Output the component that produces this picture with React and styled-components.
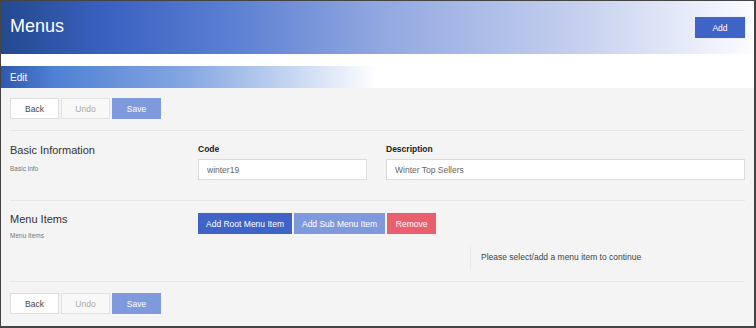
import React from 'react';
import styled, { createGlobalStyle } from 'styled-components';

const GlobalStyle = createGlobalStyle`
  html, body {
    margin: 0;
    padding: 0;
    background: #ffffff;
  }
  * {
    box-sizing: border-box;
  }
`;

const Frame = styled.div`
  width: 756px;
  height: 328px;
  border-style: solid;
  border-color: #444444;
  border-width: 1px 2px 2px 1px;
  background: #f4f4f4;
  font-family: "Liberation Sans", Arial, sans-serif;
  color: #333333;
  overflow: hidden;
`;

const Header = styled.header`
  height: 53px;
  display: flex;
  align-items: center;
  justify-content: space-between;
  padding: 0 9px 0 9px;
  background: linear-gradient(
    to right,
    #23498f 0%,
    #3a61c0 14%,
    #5a7ed2 30%,
    #90a7e0 50%,
    #c4cfee 76%,
    #fbfcff 100%
  );
`;

const Title = styled.h1`
  margin: 0 0 2px;
  font-size: 18px;
  font-weight: 400;
  color: #ffffff;
`;

const Spacer = styled.div`
  height: 12px;
  background: #ffffff;
`;

const EditBar = styled.div`
  height: 22px;
  display: flex;
  align-items: center;
  padding-left: 9px;
  font-size: 10px;
  color: #ffffff;
  background: linear-gradient(
    to right,
    #2f59ae 0%,
    #4e80d4 7%,
    #86a8e2 25%,
    #cddbf3 40%,
    #ffffff 50%
  );
`;

const Content = styled.main`
  padding: 10px 9px 0 9px;
`;

const Toolbar = styled.div`
  display: flex;
  gap: 2px;
`;

const variants = {
  plain: 'background: #ffffff; color: #444444; border-color: #dddddd;',
  disabled: 'background: #f8f8f8; color: #aaaaaa; border-color: #e2e2e2;',
  soft: 'background: #7f9adc; color: #ffffff; border-color: #7f9adc;',
  primary: 'background: #3f63c6; color: #ffffff; border-color: #3f63c6;',
  danger: 'background: #ea5f6e; color: #ffffff; border-color: #ea5f6e;',
};

const Button = styled.button`
  height: 21px;
  width: ${(p) => (p.$wide ? 'auto' : '49px')};
  padding: 0 ${(p) => (p.$wide ? '7px' : '0')};
  border: 1px solid;
  font-family: inherit;
  font-size: 8.5px;
  cursor: pointer;
  ${(p) => variants[p.$variant || 'plain']}
`;

const AddButton = styled(Button)`
  width: 50px;
  outline: 1px solid #e8edf8;
`;

const Divider = styled.hr`
  margin: 0;
  border: 0;
  border-top: 1px solid #e6e6e6;
`;

const Gap = styled.div`
  height: ${(p) => p.$h}px;
`;

const Section = styled.section`
  display: grid;
  grid-template-columns: 188px 1fr;
  padding: ${(p) => p.$pad};
`;

const SectionInfo = styled.div`
  display: flex;
  flex-direction: column;
  gap: ${(p) => p.$gap || 8}px;
`;

const SectionTitle = styled.h2`
  margin: 0;
  font-size: 11px;
  font-weight: 400;
  color: #333333;
`;

const SectionHint = styled.div`
  font-size: 6.5px;
  color: #777777;
`;

const Fields = styled.div`
  display: grid;
  grid-template-columns: 188px 1fr;
`;

const Field = styled.label`
  display: flex;
  flex-direction: column;
  gap: 5px;
`;

const FieldLabel = styled.span`
  font-size: 8.5px;
  font-weight: 700;
  color: #222222;
`;

const Input = styled.input`
  width: ${(p) => p.$width || '100%'};
  height: 21px;
  padding: 0 8px;
  border: 1px solid #dcdcdc;
  background: #ffffff;
  font-family: inherit;
  font-size: 8.5px;
  color: #666666;
  outline: none;
`;

const ItemsArea = styled.div`
  display: flex;
  flex-direction: column;
  gap: 11px;
`;

const Panes = styled.div`
  display: grid;
  grid-template-columns: 272px 1fr;
`;

const Message = styled.div`
  height: 24px;
  display: flex;
  align-items: center;
  padding-left: 10px;
  border-left: 1px solid #e8e8e8;
  font-size: 8.5px;
  color: #444444;
`;

const Actions = () => (
  <Toolbar>
    <Button $variant="plain">Back</Button>
    <Button $variant="disabled">Undo</Button>
    <Button $variant="soft">Save</Button>
  </Toolbar>
);

export default function App() {
  return (
    <>
      <GlobalStyle />
      <Frame>
        <Header>
          <Title>Menus</Title>
          <AddButton $variant="primary">Add</AddButton>
        </Header>
        <Spacer />
        <EditBar>Edit</EditBar>
        <Content>
          <Actions />
          <Gap $h={11} />
          <Divider />
          <Section $pad="13px 0 20px">
            <SectionInfo $gap={9}>
              <SectionTitle>Basic Information</SectionTitle>
              <SectionHint>Basic info</SectionHint>
            </SectionInfo>
            <Fields>
              <Field>
                <FieldLabel>Code</FieldLabel>
                <Input $width="169px" defaultValue="winter19" />
              </Field>
              <Field>
                <FieldLabel>Description</FieldLabel>
                <Input defaultValue="Winter Top Sellers" />
              </Field>
            </Fields>
          </Section>
          <Divider />
          <Section $pad="12px 0 12px">
            <SectionInfo $gap={7}>
              <SectionTitle>Menu Items</SectionTitle>
              <SectionHint>Menu Items</SectionHint>
            </SectionInfo>
            <ItemsArea>
              <Toolbar>
                <Button $variant="primary" $wide>Add Root Menu Item</Button>
                <Button $variant="soft" $wide>Add Sub Menu Item</Button>
                <Button $variant="danger">Remove</Button>
              </Toolbar>
              <Panes>
                <div />
                <Message>Please select/add a menu item to continue</Message>
              </Panes>
            </ItemsArea>
          </Section>
          <Divider />
          <Gap $h={11} />
          <Actions />
        </Content>
      </Frame>
    </>
  );
}
